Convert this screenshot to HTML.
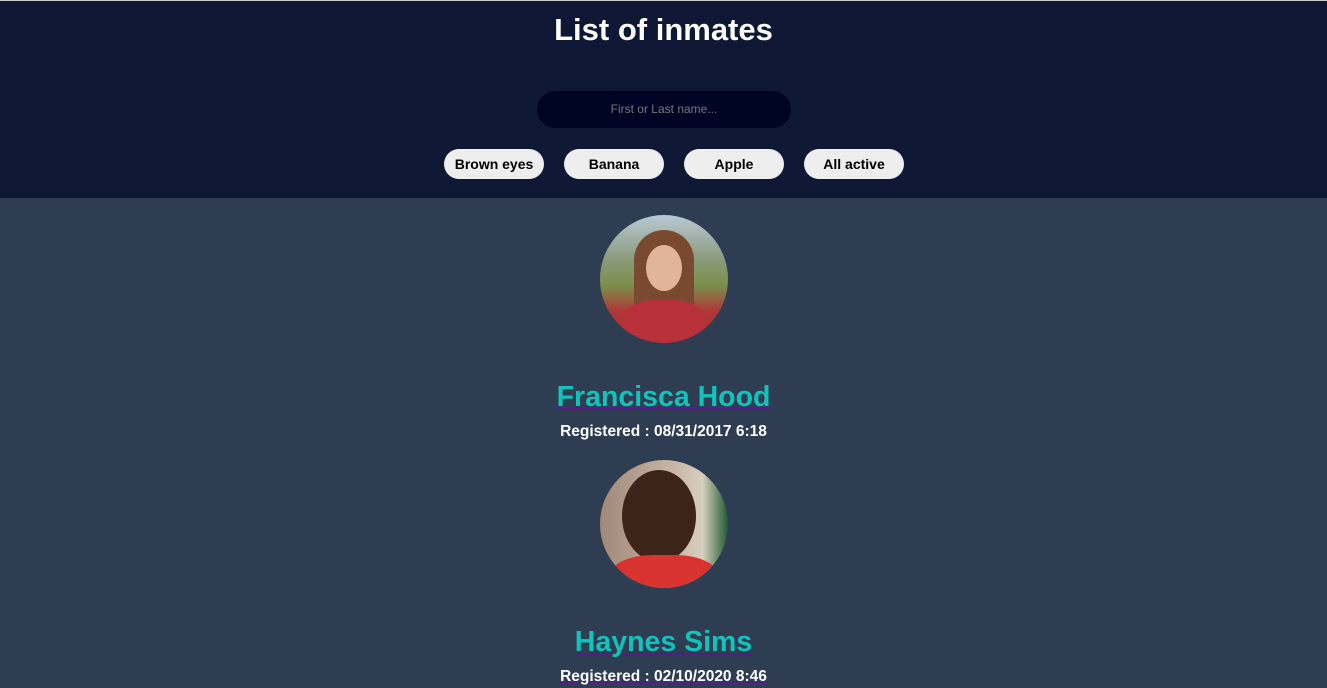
<!DOCTYPE html>
<html><head><style>
html,body{margin:0;padding:0;}
body{width:1327px;height:688px;overflow:hidden;background:#2e3d52;font-family:"Liberation Sans",sans-serif;border-top:1px solid #ccc;box-sizing:border-box;position:relative;}
.hdr{position:absolute;left:0;top:0;width:1327px;height:197px;background:#0e1733;}
h1{position:absolute;top:11px;left:0;width:100%;text-align:center;margin:0;color:#fff;font-size:31px;font-weight:bold;}
.search{position:absolute;left:537px;top:90px;width:254px;height:37px;border-radius:19px;background:#000424;color:#777;font-size:12px;text-align:center;line-height:37px;}
.btn{position:absolute;top:148px;width:100px;height:30px;border-radius:15px;background:#eee;color:#000;font-weight:bold;font-size:14px;text-align:center;line-height:30px;}
.av{position:absolute;left:600px;width:128px;height:128px;border-radius:50%;overflow:hidden;}
.name{position:absolute;left:0;width:100%;text-align:center;font-size:28.5px;font-weight:bold;color:#12c3bb;}
.name span{text-decoration:underline;text-decoration-color:#551a8b;text-decoration-thickness:2px;text-underline-offset:2px;}
.reg{position:absolute;left:0;width:100%;text-align:center;font-size:15.5px;font-weight:bold;color:#fff;}
.reg span{text-decoration:underline;text-decoration-color:#551a8b;}
</style></head><body>
<div class="hdr">
<h1>List of inmates</h1>
<div class="search">First or Last name...</div>
<div class="btn" style="left:444px">Brown eyes</div>
<div class="btn" style="left:564px">Banana</div>
<div class="btn" style="left:684px">Apple</div>
<div class="btn" style="left:804px">All active</div>
</div>
<div class="av" style="top:214px;background:linear-gradient(180deg,#b9c9d6 0%,#8a9a7a 35%,#7a8f4a 55%,#b03838 75%,#a82a30 100%);">
<div style="position:absolute;left:34px;top:15px;width:60px;height:113px;border-radius:30px 30px 10px 10px;background:#7a4a30"></div>
<div style="position:absolute;left:46px;top:30px;width:36px;height:46px;border-radius:50%;background:#e0b59a"></div>
<div style="position:absolute;left:22px;top:85px;width:84px;height:50px;border-radius:40% 40% 0 0;background:#b8303a"></div>
</div>
<div class="name" style="top:380px"><span>Francisca Hood</span></div>
<div class="reg" style="top:422px"><span>Registered : 08/31/2017 6:18</span></div>
<div class="av" style="top:459px;background:linear-gradient(90deg,#a08878 0%,#c9b8a8 60%,#d8d0c0 80%,#1f5a30 100%);">
<div style="position:absolute;left:22px;top:10px;width:74px;height:92px;border-radius:50%;background:#3d2418"></div>
<div style="position:absolute;left:10px;top:95px;width:108px;height:50px;border-radius:40% 40% 0 0;background:#d8332e"></div>
</div>
<div class="name" style="top:625px"><span>Haynes Sims</span></div>
<div class="reg" style="top:667px"><span>Registered : 02/10/2020 8:46</span></div>
</body></html>
